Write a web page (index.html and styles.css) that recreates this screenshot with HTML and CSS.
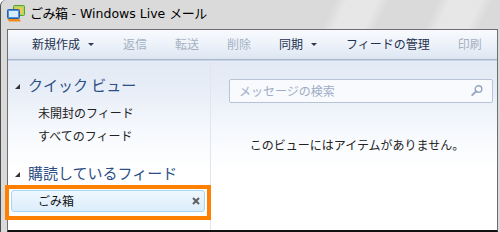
FILE: index.html
```html
<!DOCTYPE html>
<html lang="ja">
<head>
<meta charset="utf-8">
<title>ごみ箱 - Windows Live メール</title>
<link rel="stylesheet" href="styles.css">
</head>
<body>
<div class="win">
  <div class="titlebar">
    <svg class="appicon" width="18" height="17" viewBox="0 0 18 17">
      <rect x="6.5" y="0.5" width="11" height="10" rx="1" fill="#a6d86a" stroke="#5f9e2a"/>
      <rect x="8.5" y="2.5" width="7" height="6" fill="#f2c94c"/>
      <rect x="0.5" y="4.5" width="12" height="9" rx="1" fill="#4a90dc" stroke="#2a5f9e"/>
      <rect x="2" y="6" width="9" height="6" fill="#d7ebfc"/>
      <path d="M0.5 14 H12.5 L14 16.5 H2 Z" fill="#f08a1c"/>
    </svg>
    <span class="title"><span class="jp">ごみ箱</span> - Windows Live <span class="jp">メール</span></span>
  </div>
  <div class="frame">
    <div class="toolbar">
      <span class="tb on">新規作成<i class="caret"></i></span>
      <span class="tb off">返信</span>
      <span class="tb off">転送</span>
      <span class="tb off">削除</span>
      <span class="tb on">同期<i class="caret"></i></span>
      <span class="tb on">フィードの管理</span>
      <span class="tb off">印刷</span>
    </div>
    <div class="main">
      <div class="side">
        <div class="head"><i class="tri"></i>クイック ビュー</div>
        <div class="list">
          <div class="item">未開封のフィード</div>
          <div class="item">すべてのフィード</div>
        </div>
        <div class="head head2"><i class="tri"></i>購読しているフィード</div>
        <div class="sel">ごみ箱<svg class="x" width="8" height="8" viewBox="0 0 8 8"><path d="M1 1 L7 7 M7 1 L1 7" stroke="#5f5f5f" stroke-width="2"/></svg></div>
        <div class="mark"></div>
      </div>
      <div class="content">
        <div class="search">
          <span class="ph">メッセージの検索</span>
          <svg width="12" height="11" viewBox="0 0 12 11"><circle cx="7.5" cy="4" r="3.3" fill="none" stroke="#93a4be" stroke-width="1.4"/><path d="M5.2 6.4 L1.2 10" stroke="#93a4be" stroke-width="1.8" stroke-linecap="round"/></svg>
        </div>
        <div class="empty">このビューにはアイテムがありません。</div>
      </div>
    </div>
  </div>
</div>
</body>
</html>
```
FILE: styles.css
```css
html, body {
  margin: 0;
  padding: 0;
  background: #fdfdfd;
}
body {
  width: 500px;
  height: 232px;
  overflow: hidden;
  font-family: "Noto Sans CJK JP", sans-serif;
}
.win {
  position: relative;
  width: 499px;
  height: 232px;
  border-left: 1px solid #4d4d4d;
  border-top-left-radius: 6px;
  background:
    linear-gradient(115deg, rgba(255,255,255,0) 0 55%, rgba(255,255,255,0.35) 57% 62%, rgba(255,255,255,0) 64% 72%, rgba(255,255,255,0.35) 74% 79%, rgba(255,255,255,0) 81%),
    #dadada;
  display: flex;
  flex-direction: column;
}
.titlebar {
  height: 29px;
  display: flex;
  align-items: center;
  padding-left: 6px;
  gap: 5px;
}
.appicon {
  margin-top: -1px;
}
.title {
  font-family: "DejaVu Sans", "Noto Sans CJK JP", sans-serif;
  font-size: 12.5px;
  color: #000;
  line-height: 16px;
  margin-top: -1px;
}
.title .jp {
  font-family: "Noto Sans CJK JP", sans-serif;
  font-size: 13px;
  letter-spacing: -0.5px;
}
.frame {
  margin-left: 6px;
  width: 489px;
  height: 201px;
  border: 1px solid #6e6e6e;
  border-bottom: 2px solid #111;
  background: #fff;
  display: flex;
  flex-direction: column;
}
.toolbar {
  height: 29px;
  border-bottom: 1px solid #a9b7ca;
  box-shadow: 0 1px 0 #c9d6e6;
  background: linear-gradient(#f8fafd, #eef3fa 45%, #dde6f2);
  display: flex;
  align-items: center;
  gap: 28px;
  padding-left: 24px;
  font-size: 12px;
  line-height: 16px;
}
.tb {
  display: flex;
  align-items: center;
}
.tb.on { color: #1e3150; }
.tb.off { color: #a5b1c2; }
.caret {
  width: 0;
  height: 0;
  border-left: 3px solid transparent;
  border-right: 3px solid transparent;
  border-top: 3px solid #2b3a52;
  margin-left: 8px;
  margin-right: 1px;
}
.main {
  flex: 1;
  display: flex;
  margin-top: 1px;
  background: linear-gradient(#e3eaf5, #e8eef7 30px, #f6f9fd 70px, #fff 110px);
}
.side {
  position: relative;
  width: 202px;
  border-right: 1px solid #e1e6ee;
  padding-top: 12px;
  display: flex;
  flex-direction: column;
}
.head {
  display: flex;
  align-items: center;
  height: 24px;
  padding-left: 7px;
  font-size: 15px;
  color: #2d4f86;
}
.tri {
  width: 0;
  height: 0;
  border-left: 5px solid transparent;
  border-bottom: 5px solid #333;
  margin-right: 8px;
  margin-top: 3px;
}
.list {
  padding-top: 4px;
}
.item {
  height: 23px;
  line-height: 23px;
  padding-left: 30px;
  font-size: 12px;
  color: #222;
}
.head2 {
  margin-top: 14px;
}
.sel {
  margin: 5px 0 0 3px;
  box-sizing: border-box;
  width: 194px;
  height: 22px;
  border: 1px solid #a9d6f3;
  border-radius: 3px;
  background: linear-gradient(#eff7fe, #dcedfb);
  display: flex;
  align-items: center;
  justify-content: space-between;
  padding-left: 26px;
  padding-right: 4px;
  font-size: 12px;
  color: #111;
}
.x {
  margin-top: 1px;
}
.mark {
  position: absolute;
  left: -3px;
  top: 124px;
  width: 198px;
  height: 27px;
  border: 4px solid #ff7f00;
}
.content {
  flex: 1;
  display: flex;
  flex-direction: column;
  align-items: center;
}
.search {
  margin-top: 18px;
  margin-left: 18px;
  margin-right: 4px;
  align-self: stretch;
  height: 22px;
  border: 1px solid #b8c4d6;
  border-radius: 2px;
  background: #f8fafd;
  display: flex;
  align-items: center;
  justify-content: space-between;
  padding: 0 9px 0 9px;
}
.ph {
  font-size: 12px;
  color: #9eadc6;
}
.empty {
  margin-top: 33px;
  margin-left: 6px;
  font-size: 12px;
  line-height: 18px;
  color: #222;
}
```
